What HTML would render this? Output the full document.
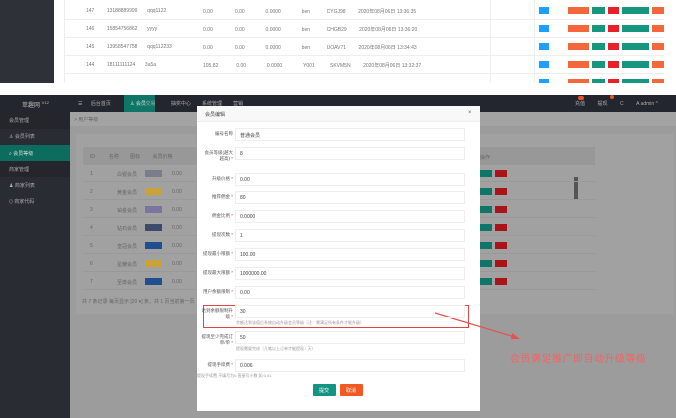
<!DOCTYPE html><html><head><meta charset="utf-8"><style>
*{margin:0;padding:0;box-sizing:border-box}
body{width:676px;height:418px;overflow:hidden;background:#fff;font-family:"Liberation Sans","Noto Sans CJK SC",sans-serif;font-size:5px;color:#555;position:relative}
.a{position:absolute}
.t{position:absolute;white-space:nowrap}
.lb{position:absolute;left:201px;width:32px;text-align:right;font-size:4.5px;line-height:6px;color:#555;white-space:normal}
</style></head><body>
<div class="a" style="left:0;top:0;width:54px;height:83px;background:#2f3139"></div>
<div class="a" style="left:64px;top:0;width:600px;height:83px;background:#fff;border-left:1px solid #eee"></div>
<div class="a" style="left:64px;top:19px;width:600px;height:1px;background:#eee"></div>
<div class="a" style="left:64px;top:37px;width:600px;height:1px;background:#eee"></div>
<div class="a" style="left:64px;top:55px;width:600px;height:1px;background:#eee"></div>
<div class="a" style="left:64px;top:73px;width:600px;height:1px;background:#eee"></div>
<div class="a" style="left:534px;top:0;width:1px;height:83px;background:#eee"></div>
<div class="a" style="left:490px;top:0;width:1px;height:83px;background:#eee"></div>
<div class="t" style="left:86px;top:8px;color:#777">147&nbsp;&nbsp;&nbsp;&nbsp;&nbsp;&nbsp;&nbsp;&nbsp;&nbsp;13188889999&nbsp;&nbsp;&nbsp;&nbsp;&nbsp;&nbsp;&nbsp;qqq1122</div>
<div class="t" style="left:86px;top:26px;color:#777">146&nbsp;&nbsp;&nbsp;&nbsp;&nbsp;&nbsp;&nbsp;&nbsp;&nbsp;15854756862&nbsp;&nbsp;&nbsp;&nbsp;&nbsp;&nbsp;&nbsp;yyyy</div>
<div class="t" style="left:86px;top:44px;color:#777">145&nbsp;&nbsp;&nbsp;&nbsp;&nbsp;&nbsp;&nbsp;&nbsp;&nbsp;13958547758&nbsp;&nbsp;&nbsp;&nbsp;&nbsp;&nbsp;&nbsp;qqq112233</div>
<div class="t" style="left:86px;top:62px;color:#777">144&nbsp;&nbsp;&nbsp;&nbsp;&nbsp;&nbsp;&nbsp;&nbsp;&nbsp;18111111124&nbsp;&nbsp;&nbsp;&nbsp;&nbsp;&nbsp;&nbsp;3a5a</div>
<div class="t" style="left:203px;top:8px;color:#777">0.00&nbsp;&nbsp;&nbsp;&nbsp;&nbsp;&nbsp;&nbsp;&nbsp;&nbsp;&nbsp;&nbsp;&nbsp;&nbsp;&nbsp;&nbsp;&nbsp;0.00&nbsp;&nbsp;&nbsp;&nbsp;&nbsp;&nbsp;&nbsp;&nbsp;&nbsp;&nbsp;&nbsp;&nbsp;&nbsp;&nbsp;&nbsp;0.0000&nbsp;&nbsp;&nbsp;&nbsp;&nbsp;&nbsp;&nbsp;&nbsp;&nbsp;&nbsp;&nbsp;&nbsp;&nbsp;&nbsp;&nbsp;ben&nbsp;&nbsp;&nbsp;&nbsp;&nbsp;&nbsp;&nbsp;&nbsp;&nbsp;&nbsp;&nbsp;&nbsp;CYGJ98&nbsp;&nbsp;&nbsp;&nbsp;&nbsp;&nbsp;&nbsp;&nbsp;&nbsp;2020年08月06日 13:36:35</div>
<div class="t" style="left:203px;top:26px;color:#777">0.00&nbsp;&nbsp;&nbsp;&nbsp;&nbsp;&nbsp;&nbsp;&nbsp;&nbsp;&nbsp;&nbsp;&nbsp;&nbsp;&nbsp;&nbsp;&nbsp;0.00&nbsp;&nbsp;&nbsp;&nbsp;&nbsp;&nbsp;&nbsp;&nbsp;&nbsp;&nbsp;&nbsp;&nbsp;&nbsp;&nbsp;&nbsp;0.0000&nbsp;&nbsp;&nbsp;&nbsp;&nbsp;&nbsp;&nbsp;&nbsp;&nbsp;&nbsp;&nbsp;&nbsp;&nbsp;&nbsp;&nbsp;ben&nbsp;&nbsp;&nbsp;&nbsp;&nbsp;&nbsp;&nbsp;&nbsp;&nbsp;&nbsp;&nbsp;&nbsp;CHGB29&nbsp;&nbsp;&nbsp;&nbsp;&nbsp;&nbsp;&nbsp;&nbsp;&nbsp;2020年08月06日 13:36:20</div>
<div class="t" style="left:203px;top:44px;color:#777">0.00&nbsp;&nbsp;&nbsp;&nbsp;&nbsp;&nbsp;&nbsp;&nbsp;&nbsp;&nbsp;&nbsp;&nbsp;&nbsp;&nbsp;&nbsp;&nbsp;0.00&nbsp;&nbsp;&nbsp;&nbsp;&nbsp;&nbsp;&nbsp;&nbsp;&nbsp;&nbsp;&nbsp;&nbsp;&nbsp;&nbsp;&nbsp;0.0000&nbsp;&nbsp;&nbsp;&nbsp;&nbsp;&nbsp;&nbsp;&nbsp;&nbsp;&nbsp;&nbsp;&nbsp;&nbsp;&nbsp;&nbsp;ben&nbsp;&nbsp;&nbsp;&nbsp;&nbsp;&nbsp;&nbsp;&nbsp;&nbsp;&nbsp;&nbsp;&nbsp;UOAV71&nbsp;&nbsp;&nbsp;&nbsp;&nbsp;&nbsp;&nbsp;&nbsp;&nbsp;2020年08月06日 13:34:43</div>
<div class="t" style="left:203px;top:62px;color:#777">105.82&nbsp;&nbsp;&nbsp;&nbsp;&nbsp;&nbsp;&nbsp;&nbsp;&nbsp;&nbsp;&nbsp;&nbsp;&nbsp;0.00&nbsp;&nbsp;&nbsp;&nbsp;&nbsp;&nbsp;&nbsp;&nbsp;&nbsp;&nbsp;&nbsp;&nbsp;&nbsp;&nbsp;&nbsp;0.0000&nbsp;&nbsp;&nbsp;&nbsp;&nbsp;&nbsp;&nbsp;&nbsp;&nbsp;&nbsp;&nbsp;&nbsp;&nbsp;&nbsp;&nbsp;Y001&nbsp;&nbsp;&nbsp;&nbsp;&nbsp;&nbsp;&nbsp;&nbsp;&nbsp;&nbsp;&nbsp;SKVM5N&nbsp;&nbsp;&nbsp;&nbsp;&nbsp;&nbsp;&nbsp;&nbsp;&nbsp;2020年08月06日 13:32:37</div>
<div id="tb"></div>

<div class="a" style="left:0;top:95px;width:676px;height:17px;background:#23262e"></div>
<div class="a" style="left:124px;top:95px;width:31px;height:17px;background:#0f7566"></div>
<div class="t" style="left:22px;top:100px;color:#bbb;font-size:6px">萃趣网 <sup style="font-size:4px">V12</sup></div>
<div class="t" style="left:78px;top:100px;color:#aaa">☰&nbsp;&nbsp;&nbsp;&nbsp;&nbsp;&nbsp;后台首页&nbsp;&nbsp;&nbsp;&nbsp;&nbsp;&nbsp;&nbsp;&nbsp;&nbsp;&nbsp;&nbsp;&nbsp;&nbsp;&nbsp;&nbsp;&nbsp;&nbsp;&nbsp;&nbsp;&nbsp;&nbsp;&nbsp;&nbsp;&nbsp;&nbsp;交易&nbsp;&nbsp;&nbsp;&nbsp;&nbsp;&nbsp;&nbsp;&nbsp;&nbsp;&nbsp;&nbsp;抽奖中心&nbsp;&nbsp;&nbsp;&nbsp;&nbsp;&nbsp;&nbsp;&nbsp;系统管理&nbsp;&nbsp;&nbsp;&nbsp;&nbsp;&nbsp;&nbsp;&nbsp;营销</div>
<div class="t" style="left:130px;top:100px;color:#ddd">♙ 会员</div>
<div class="t" style="left:575px;top:100px;color:#aaa">充值&nbsp;&nbsp;&nbsp;&nbsp;&nbsp;&nbsp;&nbsp;&nbsp;&nbsp;提现&nbsp;&nbsp;&nbsp;&nbsp;&nbsp;&nbsp;&nbsp;&nbsp;&nbsp;C&nbsp;&nbsp;&nbsp;&nbsp;&nbsp;&nbsp;&nbsp;&nbsp;&nbsp;A admin ^</div>
<div class="a" style="left:578px;top:96px;width:6px;height:4px;background:#e8552a;border-radius:2px"></div>
<div class="a" style="left:610px;top:95px;width:4px;height:4px;background:#e8552a;border-radius:2px"></div>
<div class="a" style="left:0;top:112px;width:70px;height:306px;background:#2a2c33"></div>
<div class="a" style="left:0;top:112px;width:70px;height:17px;background:#24262c"></div>
<div class="a" style="left:0;top:145px;width:70px;height:16px;background:#0c6d5f"></div>
<div class="a" style="left:0;top:161px;width:70px;height:16px;background:#24262c"></div>
<div class="t" style="left:9px;top:117px;color:#aaa">会员管理</div>
<div class="t" style="left:9px;top:133px;color:#aaa">♙ 会员列表</div>
<div class="t" style="left:9px;top:150px;color:#ddd">⌕ 会员等级</div>
<div class="t" style="left:9px;top:166px;color:#aaa">商家管理</div>
<div class="t" style="left:9px;top:182px;color:#aaa">♟ 商家列表</div>
<div class="t" style="left:9px;top:198px;color:#aaa">⟨⟩ 商家代码</div>
<div class="a" style="left:70px;top:112px;width:606px;height:306px;background:#9c9c9c"></div>
<div class="a" style="left:70px;top:112px;width:606px;height:14px;background:#a3a3a3"></div>
<div class="t" style="left:74px;top:116px;color:#666">&gt; 用户等级</div>
<div class="a" style="left:76px;top:134px;width:598px;height:180px;background:#a1a1a1"></div>
<div class="a" style="left:83px;top:147px;width:512px;height:18px;background:#989898"></div>
<div class="a" style="left:574px;top:177px;width:4px;height:22px;background:#555"></div>
<div class="t" style="left:90px;top:153px;color:#666">ID&nbsp;&nbsp;&nbsp;&nbsp;&nbsp;&nbsp;&nbsp;&nbsp;&nbsp;&nbsp;名称&nbsp;&nbsp;&nbsp;&nbsp;&nbsp;&nbsp;&nbsp;&nbsp;图标&nbsp;&nbsp;&nbsp;&nbsp;&nbsp;&nbsp;&nbsp;&nbsp;&nbsp;会员价格</div>
<div class="t" style="left:480px;top:154px;color:#666">操作</div>
<div class="t" style="left:82px;top:298px;color:#666">共 7 条记录 每页显示 [20 ▾] 条，共 1 页当前第一页</div>
<div id="rows"></div>
<div class="a" style="left:197px;top:106px;width:283px;height:305px;background:#fff"></div>
<div class="a" style="left:197px;top:106px;width:283px;height:16px;background:#f8f8f8;border-bottom:1px solid #eee"></div>
<div class="t" style="left:205px;top:111px;color:#444">会员编辑</div>
<div class="t" style="left:468px;top:110px;color:#666;font-size:6px">×</div>
<div class="a" style="left:203px;top:305px;width:266px;height:23px;border:1.5px solid #e04646"></div>
<svg class="a" style="left:0;top:0" width="676" height="418"><line x1="435" y1="313" x2="518" y2="338" stroke="#e85050" stroke-width="1.2"/><polygon points="520,339 512,333 511,339" fill="#e85050"/></svg>
<div class="t" style="left:510px;top:350px;color:#e66;font-size:10px;letter-spacing:0.5px">会员满足推广即自动升级等级</div>
<div class="a" style="left:313px;top:384px;width:23px;height:12px;background:#149482;border-radius:1px"></div>
<div class="a" style="left:340px;top:384px;width:23px;height:12px;background:#f25a24;border-radius:1px"></div>
<div class="t" style="left:319px;top:387px;color:#fff">提交</div>
<div class="t" style="left:346px;top:387px;color:#fff">取消</div>
<div class="t" style="left:197px;top:373px;color:#999;font-size:4px">提现手续费,不填写为0,直接写小数,如:0.01</div>
<script>
var tb="",G='linear-gradient(90deg,#f2683a 0 21px,#fff 21px 24px,#16967f 24px 37px,#fff 37px 40px,#e8202a 40px 51px,#fff 51px 54px,#16967f 54px 81px,#fff 81px 84px,#f2683a 84px)';
[7,25,43,61,79].forEach(function(y){var h=y==79?4:7;tb+='<div class="a" style="left:539px;top:'+y+'px;width:10px;height:'+h+'px;background:#1e9fff"></div><div class="a" style="left:568px;top:'+y+'px;width:96px;height:'+h+'px;background:'+G+'"></div>';});
document.getElementById("tb").innerHTML=tb;
var f=[[134,"编号名称","普通会员",0],[153,"会员等级(越大越高)","8",1],[179,"升级价格","0.00",1],[197,"推荐佣金","80",1],[216,"佣金比例","0.0000",1],[235,"提现次数","1",1],[254,"提现最小限额","100.00",1],[273,"提现最大限额","1000000.00",1],[292,"用户余额限制","0.00",1],[311,"达到余额限制升级","30",1],[337,"提现至少完成订单/单","50",1],[365,"提现手续费","0.006",1]];
var h="";f.forEach(function(r){var y=r[0];var two=r[1].length>6;h+='<div class="a" style="left:235px;top:'+(y-6)+'px;width:230px;height:13px;border:1px solid #eee"></div>';h+='<div class="lb" style="top:'+(y-3)+'px">'+r[1]+(r[3]?' <span style="color:#e33">*</span>':'')+'</div>';h+='<div class="t" style="left:240px;top:'+(y-2)+'px;color:#444">'+r[2]+'</div>';});
h+='<div class="t" style="left:236px;top:320px;color:#999;font-size:4px">余额达到该值后系统自动升级会员等级（注：需满足所有条件才能升级）</div>';
h+='<div class="t" style="left:236px;top:346px;color:#999;font-size:4px">提现需要完成（几笔以上订单才能提现 / 天）</div>';
document.body.insertAdjacentHTML("beforeend",h);
var nm=["白银会员","黄金会员","铂金会员","钻石会员","皇冠会员","星耀会员","至尊会员"],cl=["#7c7c8c","#c9a23a","#7c74a0","#3d4a6a","#1f4f8f","#c9a23a","#1f4f8f"];var g="";
for(var i=0;i<7;i++){var y=173+i*18;g+='<div class="a" style="left:83px;top:'+(y+8)+'px;width:512px;height:1px;background:#999"></div>';g+='<div class="t" style="left:90px;top:'+(y-2)+'px;color:#666">'+(i+1)+'</div><div class="t" style="left:117px;top:'+(y-2)+'px;color:#666">'+nm[i]+'</div><div class="a" style="left:145px;top:'+(y-3)+'px;width:17px;height:7px;background:'+cl[i]+'"></div><div class="t" style="left:172px;top:'+(y-2)+'px;color:#666">0.00</div>';g+='<div class="a" style="left:480px;top:'+(y-3)+'px;width:12px;height:7px;background:#0f7566"></div><div class="a" style="left:495px;top:'+(y-3)+'px;width:12px;height:7px;background:#a8141a"></div>';}
document.getElementById("rows").innerHTML=g;
</script>
</body></html>
